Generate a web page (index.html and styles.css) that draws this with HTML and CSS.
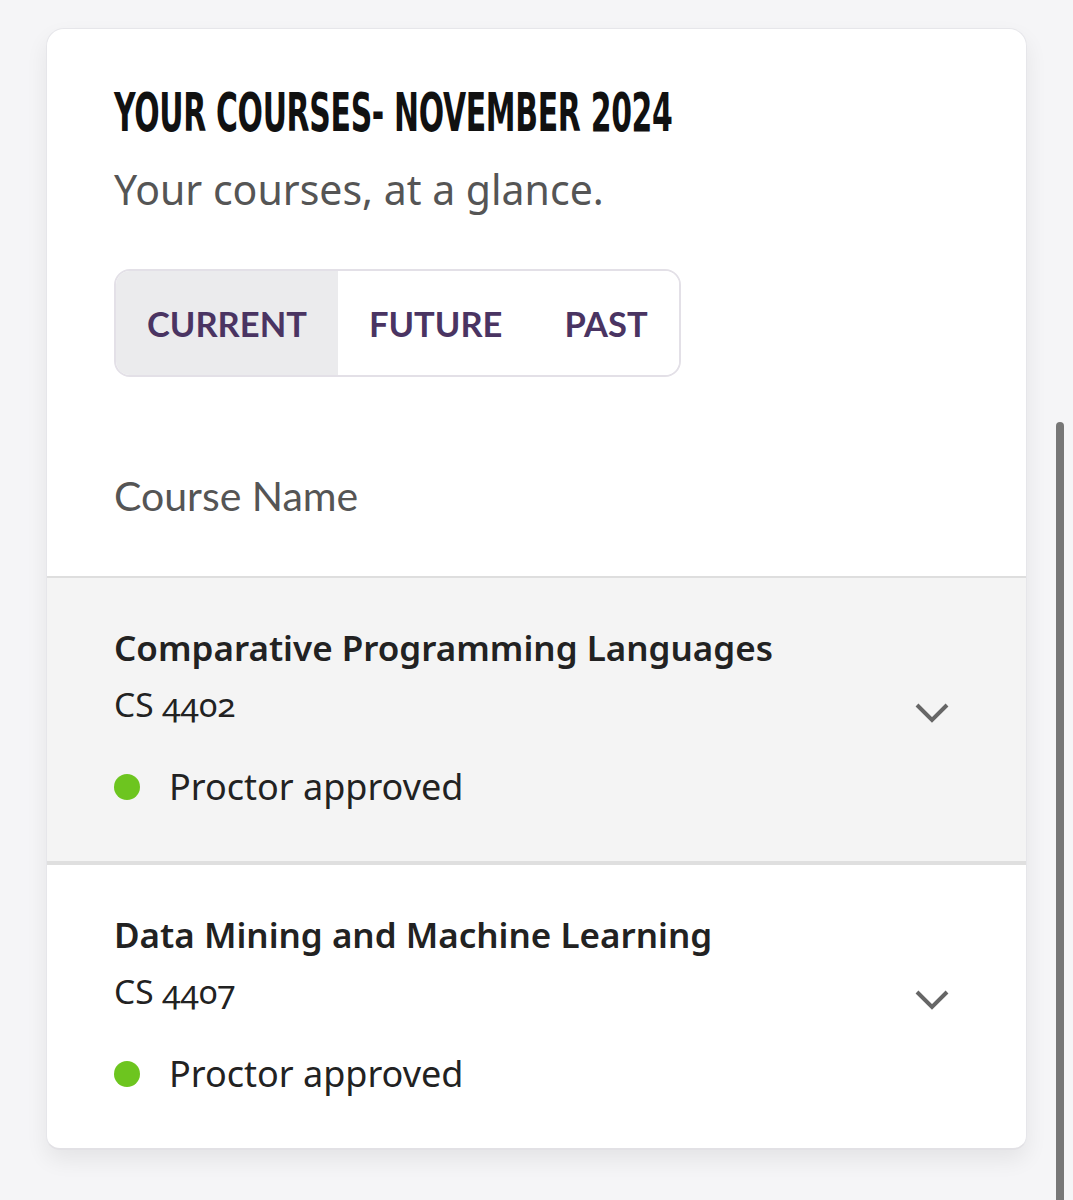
FILE: index.html
```html
<!DOCTYPE html>
<html lang="en">
<head>
<meta charset="utf-8">
<title>Your courses</title>
<link rel="stylesheet" href="styles.css">
</head>
<body>
<main class="page">
  <section class="card">
    <header class="card-head">
      <h1 class="title">YOUR COURSES- NOVEMBER 2024</h1>
      <p class="subtitle">Your courses, at a glance.</p>
      <div class="tabs">
        <button class="tab active">CURRENT</button>
        <button class="tab">FUTURE</button>
        <button class="tab">PAST</button>
      </div>
      <div class="col-label">Course Name</div>
    </header>
    <div class="row shaded">
      <div class="info">
        <div class="course-title">Comparative Programming Languages</div>
        <div class="course-code">CS 4402</div>
        <div class="status"><span class="dot"></span><span>Proctor approved</span></div>
      </div>
      <svg class="chev" width="36" height="22" viewBox="0 0 36 22"><path d="M3 3 L18 18 L33 3" fill="none" stroke="#666" stroke-width="4"/></svg>
    </div>
    <div class="row last">
      <div class="info">
        <div class="course-title">Data Mining and Machine Learning</div>
        <div class="course-code">CS 4407</div>
        <div class="status"><span class="dot"></span><span>Proctor approved</span></div>
      </div>
      <svg class="chev" width="36" height="22" viewBox="0 0 36 22"><path d="M3 3 L18 18 L33 3" fill="none" stroke="#666" stroke-width="4"/></svg>
    </div>
  </section>
</main>
<div class="scroll-thumb"></div>
</body>
</html>
```
FILE: styles.css
```css
html, body {
  margin: 0;
  padding: 0;
  background: #f5f5f7;
}
body {
  font-family: "Noto Sans", Lato, sans-serif;
  color: #222;
}
.page {
  padding: 28px 46px 60px;
}
.card {
  background: #fff;
  border: 1px solid #e6e6ea;
  border-bottom: 2px solid #e2e1e5;
  border-radius: 18px 18px 14px 14px;
  box-shadow: 0 10px 22px rgba(0, 0, 0, 0.07);
}
.card-head {
  padding: 56px 67px 52px;
}
.title {
  margin: 0;
  font-family: "DejaVu Sans Condensed", "DejaVu Sans", sans-serif;
  font-weight: bold;
  font-size: 54px;
  line-height: 56px;
  color: #111;
  white-space: nowrap;
  transform: scaleX(0.615);
  transform-origin: left center;
  letter-spacing: -0.5px;
}
.subtitle {
  margin: 20px 0 0;
  font-size: 41px;
  line-height: 56px;
  color: #555;
}
.tabs {
  display: inline-flex;
  margin-top: 52px;
  height: 104px;
  border: 2px solid #e3e0e7;
  border-radius: 16px;
  overflow: hidden;
}
.tab {
  border: 0;
  background: #fff;
  padding: 0 31px;
  font-family: Lato, "Noto Sans", sans-serif;
  font-weight: bold;
  font-size: 34.5px;
  letter-spacing: 0;
  color: #4a3462;
}
.tab.active {
  background: #ebebed;
}
.col-label {
  margin-top: 91px;
  font-family: Lato, "Noto Sans", sans-serif;
  font-size: 41px;
  line-height: 56px;
  color: #555;
}
.row {
  display: flex;
  align-items: center;
  justify-content: space-between;
  padding: 42px 76px 46px 67px;
  border-top: 2px solid #dedede;
}
.row.shaded {
  background: #f4f4f4;
}
.row.last {
  border-top: 4px solid #dfdfdf;
}
.course-title {
  font-weight: 600;
  font-size: 35px;
  line-height: 56px;
  color: #222;
}
.course-code {
  font-size: 33.5px;
  line-height: 56px;
  color: #222;
  font-variant-numeric: oldstyle-nums;
}
.status {
  display: flex;
  align-items: center;
  gap: 29px;
  margin-top: 27px;
  font-size: 36px;
  line-height: 56px;
}
.dot {
  width: 26px;
  height: 26px;
  border-radius: 50%;
  background: #6dc51f;
  flex: none;
}
.chev {
  margin-bottom: 10px;
}
.scroll-thumb {
  position: fixed;
  right: 9px;
  top: 422px;
  bottom: 0;
  width: 8px;
  background: #777;
  border-radius: 4px 4px 0 0;
}
```
